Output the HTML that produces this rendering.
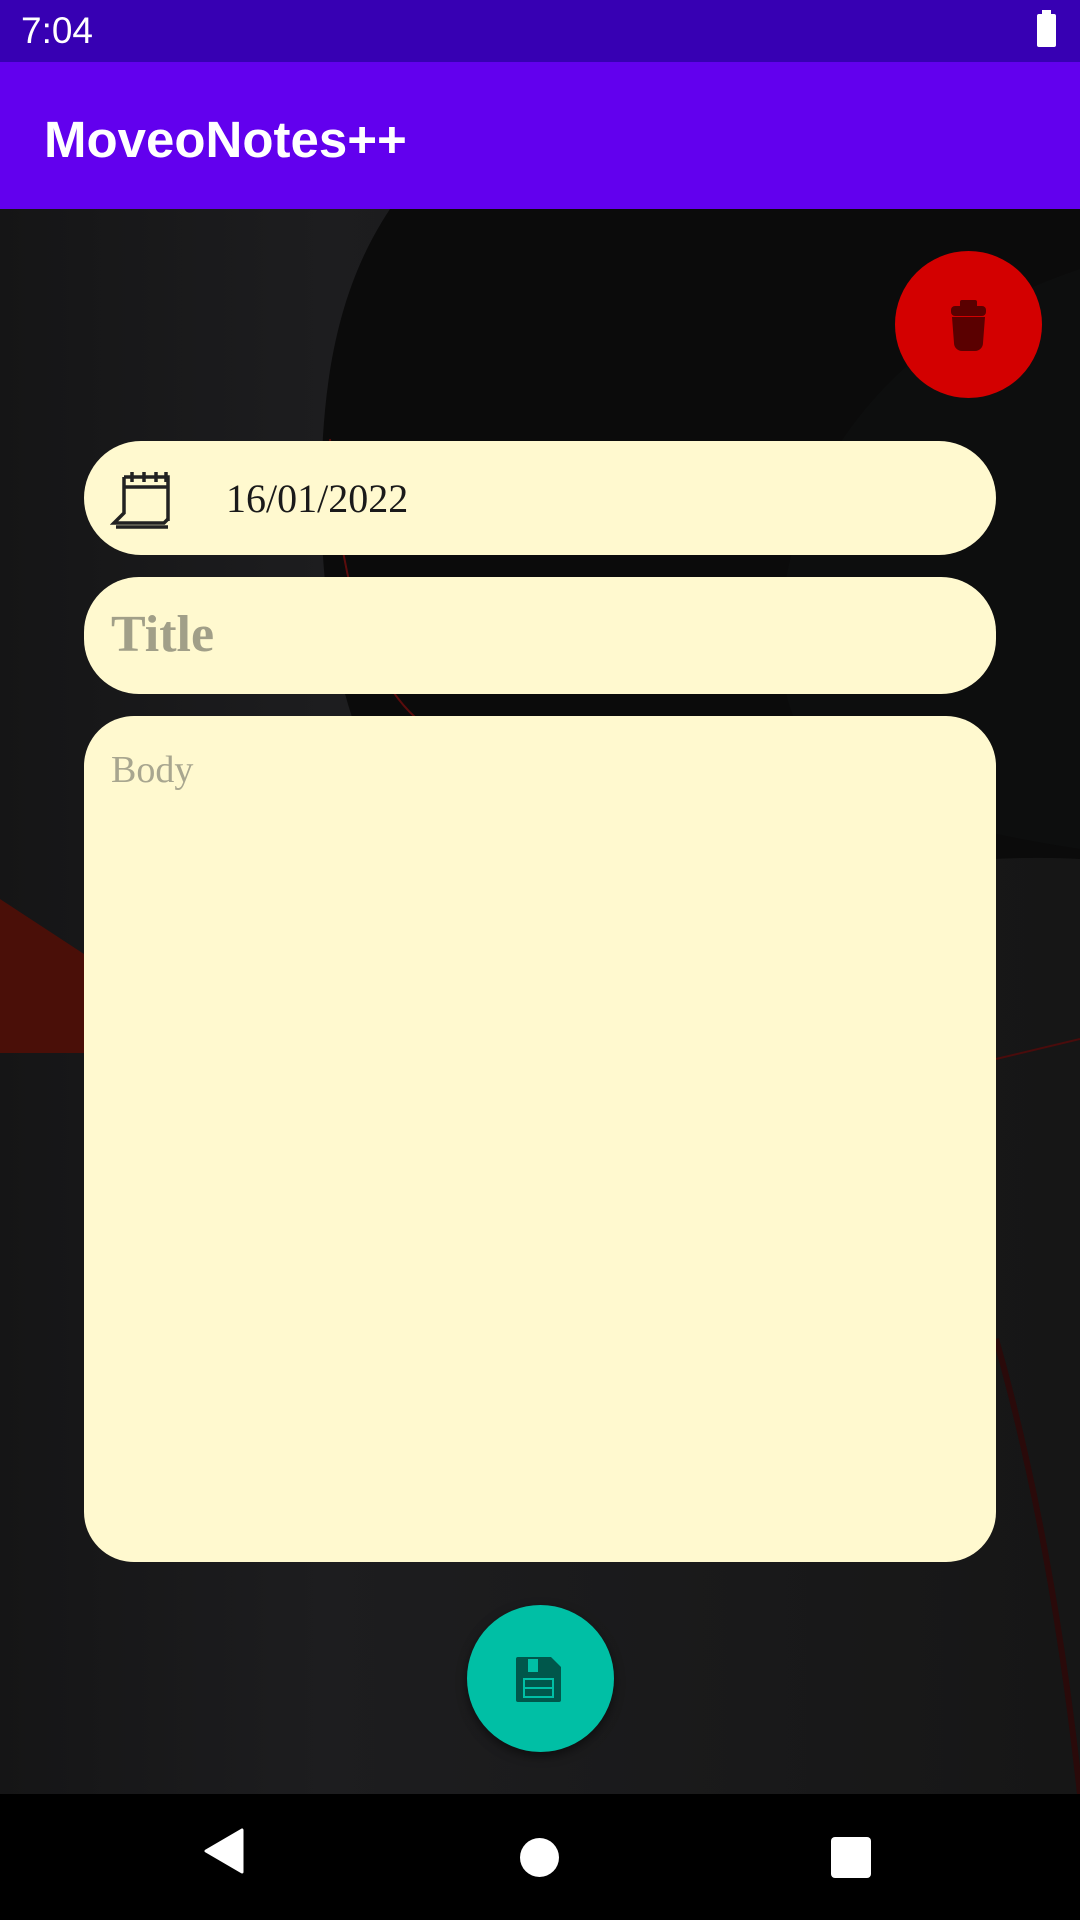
<!DOCTYPE html>
<html><head><meta charset="utf-8">
<style>
*{margin:0;padding:0;box-sizing:border-box}
body{width:1080px;height:1920px;overflow:hidden;position:relative;font-family:"Liberation Sans",sans-serif;background:#141415}
.status{position:absolute;left:0;top:0;width:1080px;height:62px;background:#3700b3;color:#fff;font-size:37px}
.status span{position:absolute;left:21px;top:10px}
.bat{position:absolute;right:24px;top:14px;width:19px;height:33px;background:#fff;border-radius:2px}
.bat:before{content:"";position:absolute;left:5px;top:-4px;width:9px;height:5px;background:#fff}
.appbar{position:absolute;top:62px;left:0;width:1080px;height:147px;background:#6200ee;color:#fff;font-size:51px;font-weight:bold}
.appbar span{position:absolute;left:44px;top:48px}
.bg{position:absolute;top:209px;left:0;width:1080px;height:1585px;overflow:hidden}
.field{position:absolute;left:84px;width:912px;background:#fff9cf;font-family:"Liberation Serif",serif}
.fab{position:absolute;width:147px;height:147px;border-radius:50%}
.nav{position:absolute;top:1794px;left:0;width:1080px;height:126px;background:#000}
</style></head><body>
<div class="status"><span>7:04</span><div class="bat"></div></div>
<div class="appbar"><span>MoveoNotes++</span></div>
<svg class="bg" width="1080" height="1585" viewBox="0 0 1080 1585">
<defs><linearGradient id="g" x1="0" x2="1" y1="0" y2="0"><stop offset="0" stop-color="#151516"/><stop offset=".3" stop-color="#1d1d1f"/><stop offset="1" stop-color="#161616"/></linearGradient></defs>
<rect width="1080" height="1585" fill="url(#g)"/>
<path d="M390 0C330 90 318 200 322 330C330 500 380 600 460 700C700 700 900 640 1080 650V0z" fill="#0b0b0b"/>
<path d="M1080 60C900 120 790 250 780 420C780 540 820 600 1080 640z" fill="#0d0e0e"/>
<path d="M0 690L84 745V844H0z" fill="#4a0f08"/>
<path d="M330 230C340 380 370 480 430 520" stroke="#5a0c0c" stroke-width="2" fill="none"/>
<path d="M996 850L1080 830" stroke="#4a0c0c" stroke-width="2" fill="none"/>
<path d="M996 1130C1030 1250 1060 1400 1080 1585" stroke="#2a0a0a" stroke-width="6" fill="none"/>
</svg>

<div class="fab" style="left:895px;top:251px;background:#d30000">
<svg width="147" height="147" viewBox="0 0 147 147"><g fill="#5a0000"><rect x="65" y="49" width="17" height="8" rx="2"/><rect x="56" y="55" width="35" height="10" rx="4"/><path d="M57 66h33l-2 26a8 8 0 0 1-8 8h-13a8 8 0 0 1-8-8z"/></g></svg>
</div>

<div class="field" style="top:441px;height:114px;border-radius:57px">
<svg style="position:absolute;left:26px;top:28px" width="64" height="62" viewBox="0 0 64 62"><g fill="none" stroke="#222" stroke-width="3.5"><path d="M14 8h44v44"/><path d="M14 8v36l-10 10h50l4-4"/><path d="M14 18h44"/><path d="M22 3v10M34 3v10M46 3v10M56 3v10"/><path d="M6 58h52"/></g></svg>
<div style="position:absolute;left:142px;top:34px;font-size:40px;color:#1a1a1a">16/01/2022</div>
</div>

<div class="field" style="top:577px;height:117px;border-radius:55px">
<div style="position:absolute;left:27px;top:28px;font-size:52px;color:#a19f88;font-weight:bold">Title</div>
</div>

<div class="field" style="top:716px;height:846px;border-radius:50px">
<div style="position:absolute;left:27px;top:32px;font-size:38px;color:#a8a68f">Body</div>
</div>

<div class="fab" style="left:467px;top:1605px;background:#00bfa5;box-shadow:0 4px 10px rgba(0,0,0,.5)">
<svg width="147" height="147" viewBox="0 0 147 147"><path fill="#00574b" d="M51 52h33l10 10v33a2 2 0 0 1-2 2H51a2 2 0 0 1-2-2V54a2 2 0 0 1 2-2z"/><rect x="61" y="54" width="10" height="13" fill="#00bfa5"/><g fill="none" stroke="#00bfa5" stroke-width="2"><rect x="57" y="74" width="29" height="18"/><path d="M57 83h29"/></g></svg>
</div>

<div class="nav">
<svg style="position:absolute;left:203px;top:34px" width="42" height="46" viewBox="0 0 42 46"><path d="M39 2v42L3 23z" fill="#fff" stroke="#fff" stroke-width="3" stroke-linejoin="round"/></svg>
<div style="position:absolute;left:520px;top:44px;width:39px;height:39px;border-radius:50%;background:#fff"></div>
<div style="position:absolute;left:831px;top:43px;width:40px;height:41px;border-radius:4px;background:#fff"></div>
</div>
</body></html>
